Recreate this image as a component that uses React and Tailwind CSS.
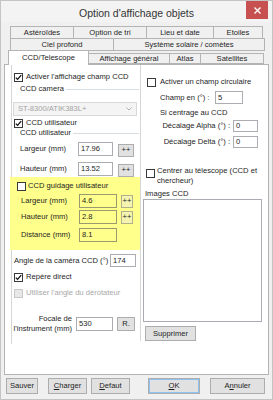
import React from 'react';

const Check = ({ checked, disabled }) => (
  <span
    className={`w-[9px] h-[9px] shrink-0 border flex items-center justify-center ${
      disabled ? 'border-[#c8c8c8] bg-[#e8e8e8]' : 'border-[#3a3a3a] bg-white'
    }`}
  >
    {checked && (
      <svg width="7" height="7" viewBox="0 0 7 7">
        <path d="M0.8 3.6 L2.6 5.4 L6.2 1.2" fill="none" stroke="#111" strokeWidth="1.3" />
      </svg>
    )}
  </span>
);

const Edit = ({ value, className = '', yellow }) => (
  <div
    className={`border px-[2px] flex items-center ${
      yellow ? 'border-[#9a9a70] bg-[#ffff8c]' : 'border-[#abadb3] bg-white'
    } ${className}`}
  >
    {value}
  </div>
);

const Btn = ({ children, className = '' }) => (
  <div className={`border border-[#adadad] bg-[#e1e1e1] flex items-center justify-center ${className}`}>
    {children}
  </div>
);

const Tab = ({ children, className = '' }) => (
  <div className={`border border-[#b4b4b4] bg-[#f0f0f0] -ml-px flex items-center justify-center ${className}`}>
    {children}
  </div>
);

const GroupLabel = ({ children }) => (
  <div className="h-[10px] flex items-center pl-[8px]">
    <span>{children}</span>
    <span className="flex-1 h-px bg-[#d8dde2] ml-[2px] mr-[1px]" />
  </div>
);

export default function App() {
  return (
    <div className="w-[273px] h-[400px] bg-[#f3f3f3] border border-[#c4c4c4] flex flex-col font-['Liberation_Sans',Arial,sans-serif] text-[7.6px] leading-[10px] text-[#1e1e1e] overflow-hidden">
      {/* title bar */}
      <div className="relative h-[21px] flex items-center justify-center shrink-0">
        <span className="text-[10.5px] text-[#333] mt-[2px]">Option d'affichage objets</span>
        <div className="absolute right-[4px] top-0 w-[22px] h-[18px] bg-[#c75050] flex items-center justify-center">
          <svg width="7" height="7" viewBox="0 0 7 7">
            <path d="M0.5 0.5 L6.5 6.5 M6.5 0.5 L0.5 6.5" stroke="#fff" strokeWidth="1.4" />
          </svg>
        </div>
      </div>

      {/* client */}
      <div className="flex-1 bg-[#f0f0f0] px-[3px] pt-[4px] flex flex-col">
        {/* tabs */}
        <div className="flex flex-col">
          <div className="flex h-[13px] ml-[7px]">
            <Tab className="w-[64px]">Astéroïdes</Tab>
            <Tab className="w-[74px]">Option de tri</Tab>
            <Tab className="w-[68px]">Lieu et date</Tab>
            <Tab className="w-[50px]">Etoiles</Tab>
          </div>
          <div className="flex h-[13px] ml-[7px] -mt-px">
            <Tab className="w-[104px]">Ciel profond</Tab>
            <Tab className="w-[152px]">Système solaire / comètes</Tab>
          </div>
          <div className="flex h-[13px] items-end ml-[4px]">
            <div className="relative z-10 w-[81px] h-[15px] -mb-px border border-b-0 border-[#b4b4b4] bg-white flex items-center justify-center">
              CCD/Telescope
            </div>
            <Tab className="w-[82px] h-[11px]">Affichage général</Tab>
            <Tab className="w-[32px] h-[11px]">Atlas</Tab>
            <Tab className="w-[64px] h-[11px]">Satellites</Tab>
          </div>
        </div>

        {/* panel */}
        <div className="h-[311px] w-[265px] border border-[#b4b4b4] bg-white flex">
          {/* left column */}
          <div className="ml-[6px] w-[129px] h-[279px] border-l border-[#d6d6d6] flex flex-col">
            <div className="mt-[7px] h-[10px] flex items-center ml-[2px] gap-[3px]">
              <Check checked />
              <span>Activer l'affichage champ CCD</span>
            </div>
            <div className="mt-[2px]">
              <GroupLabel>CCD camera</GroupLabel>
            </div>
            <div className="mt-[8px] ml-px w-[124px] h-[14px] border border-[#d9d9d9] bg-[#f4f4f4] flex items-center justify-between px-[4px] text-[#a3a3a3]">
              <span>ST-8300/ATIK383L+</span>
              <svg width="6" height="4" viewBox="0 0 6 4">
                <path d="M0.5 0.5 L3 3 L5.5 0.5" fill="none" stroke="#b0b0b0" strokeWidth="1" />
              </svg>
            </div>
            <div className="mt-[2px] h-[10px] flex items-center ml-[2px] gap-[3px]">
              <Check checked />
              <span>CCD utilisateur</span>
            </div>
            <GroupLabel>CCD utilisateur</GroupLabel>
            <div className="mt-[4px] h-[14px] flex items-center">
              <span className="w-[66px] pl-[8px]">Largeur (mm)</span>
              <Edit value="17.96" className="w-[35px] h-[14px]" />
              <Btn className="ml-[5px] w-[16px] h-[13px] mt-[2px]">++</Btn>
            </div>
            <div className="mt-[6px] h-[14px] flex items-center">
              <span className="w-[66px] pl-[8px]">Hauteur (mm)</span>
              <Edit value="13.52" className="w-[35px] h-[14px]" />
              <Btn className="ml-[5px] w-[16px] h-[13px] mt-[2px]">++</Btn>
            </div>

            {/* highlighted block */}
            <div className="mt-px -ml-[2px] w-[130px] h-[73px] bg-[#ffff8c] flex flex-col">
              <div className="mt-[4px] h-[10px] flex items-center pl-[7px] gap-[2px]">
                <Check />
                <span>CCD guidage utilisateur</span>
              </div>
              <div className="mt-[3px] h-[14px] flex items-center">
                <span className="w-[69px] pl-[11px]">Largeur (mm)</span>
                <Edit yellow value="4.6" className="w-[38px] h-[14px]" />
                <Btn className="ml-[4px] w-[12px] h-[13px] bg-[#f4f4b0] border-[#b0b08a]">++</Btn>
              </div>
              <div className="mt-[2px] h-[14px] flex items-center">
                <span className="w-[69px] pl-[11px]">Hauteur (mm)</span>
                <Edit yellow value="2.8" className="w-[38px] h-[14px]" />
                <Btn className="ml-[4px] w-[12px] h-[13px] bg-[#f4f4b0] border-[#b0b08a]">++</Btn>
              </div>
              <div className="mt-[4px] h-[14px] flex items-center">
                <span className="w-[69px] pl-[11px]">Distance (mm)</span>
                <Edit yellow value="8.1" className="w-[38px] h-[14px]" />
              </div>
            </div>

            <div className="mt-[4px] h-[13px] flex items-center">
              <span className="w-[98px] pl-[2px]">Angle de la caméra CCD (°)</span>
              <Edit value="174" className="w-[26px] h-[13px]" />
            </div>
            <div className="mt-[5px] h-[10px] flex items-center ml-[2px] gap-[3px]">
              <Check checked />
              <span>Repère direct</span>
            </div>
            <div className="mt-[6px] h-[10px] flex items-center ml-[2px] gap-[3px] text-[#a8a8a8]">
              <Check disabled />
              <span>Utiliser l'angle du dérotateur</span>
            </div>
            <div className="mt-[16px] h-[20px] flex items-center">
              <div className="w-[60px] text-right leading-[10px]">
                Focale de
                <br />
                l'instrument (mm)
              </div>
              <Edit value="530" className="ml-[4px] w-[37px] h-[14px]" />
              <Btn className="ml-[4px] w-[18px] h-[14px]">R.</Btn>
            </div>
          </div>

          {/* right column */}
          <div className="w-[127px] h-[276px] border-l border-[#d6d6d6] flex flex-col">
            <div className="mt-[12px] h-[10px] flex items-center ml-[6px] gap-[4px]">
              <Check />
              <span>Activer un champ circulaire</span>
            </div>
            <div className="mt-[4px] h-[13px] flex items-center">
              <span className="w-[74px] pl-[19px]">Champ en (°) :</span>
              <Edit value="5" className="w-[28px] h-[13px]" />
            </div>
            <div className="mt-[4px] h-[10px] flex items-center pl-[19px]">Si centrage au CCD</div>
            <div className="mt-[2px] h-[12px] flex items-center">
              <span className="w-[92px] pr-[3px] text-right">Décalage Alpha (°) :</span>
              <Edit value="0" className="w-[25px] h-[12px]" />
            </div>
            <div className="mt-[4px] h-[12px] flex items-center">
              <span className="w-[92px] pr-[3px] text-right">Décalage Delta (°) :</span>
              <Edit value="0" className="w-[25px] h-[12px]" />
            </div>
            <div className="mt-[18px] h-[20px] flex items-start ml-[5px] gap-[2px]">
              <span className="mt-[3px]">
                <Check />
              </span>
              <span className="leading-[10px]">
                Centrer au télescope (CCD et
                <br />
                chercheur)
              </span>
            </div>
            <div className="mt-[3px] h-[10px] flex items-center pl-[4px]">Images CCD</div>
            <div className="ml-[2px] w-[119px] h-[123px] border border-[#a9adb3] bg-white" />
            <Btn className="mt-[4px] ml-[4px] w-[51px] h-[15px]">Supprimer</Btn>
          </div>
        </div>

        {/* bottom buttons */}
        <div className="mt-[3px] h-[16px] flex">
          <Btn className="ml-[2px] w-[32px]">Sauver</Btn>
          <Btn className="ml-[10px] w-[39px]">
            <span>
              <span className="underline">C</span>harger
            </span>
          </Btn>
          <Btn className="ml-[4px] w-[39px]">
            <span>
              <span className="underline">D</span>efaut
            </span>
          </Btn>
          <Btn className="ml-[18px] w-[52px] border-[#3c8ad6] outline outline-1 outline-[#8fc2f0] -outline-offset-2">
            <span>
              <span className="underline">O</span>K
            </span>
          </Btn>
          <Btn className="ml-[10px] w-[55px]">
            <span>
              A<span className="underline">n</span>nuler
            </span>
          </Btn>
        </div>
      </div>
    </div>
  );
}
